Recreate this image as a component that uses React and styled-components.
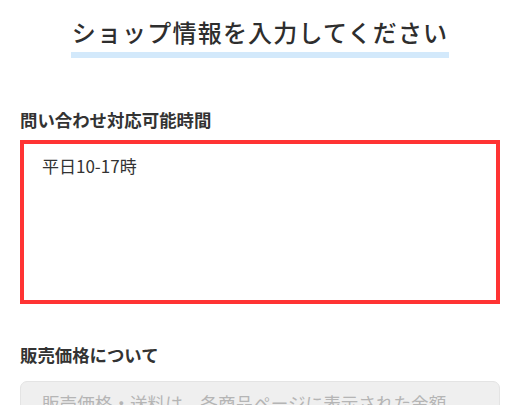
import styled, { createGlobalStyle } from 'styled-components';

const GlobalStyle = createGlobalStyle`
	body {
		margin: 0;
		background: #fff;
		font-family: 'Noto Sans CJK JP', 'Noto Sans', sans-serif;
		color: #333;
	}
`;

const Page = styled.div`
	padding: 15px 20px 0;
`;

const Heading = styled.div`
	text-align: center;
	margin-bottom: 50px;
`;

const HeadingText = styled.h1`
	display: inline-block;
	margin: 0;
	padding: 0 1px 3px;
	font-size: 24px;
	line-height: 34px;
	letter-spacing: 1.2px;
	font-weight: 500;
	color: #2e2e2e;
	border-bottom: 6px solid #d3e9fb;
`;

const Field = styled.section`
	display: flex;
	flex-direction: column;
	gap: ${(p) => p.gap}px;
	margin-bottom: 39px;
`;

const Label = styled.label`
	font-size: 17.4px;
	line-height: 24px;
	font-weight: 700;
	color: #333;
`;

const TextBox = styled.div`
	box-sizing: border-box;
	height: ${(p) => p.height}px;
	padding: ${(p) => (p.error ? '10px 18px' : '9px 40px 9px 21px')};
	border: ${(p) => (p.error ? '4px solid #ff3333' : '1px solid #e4e4e4')};
	border-radius: ${(p) => (p.error ? '0' : '7px')};
	background: ${(p) => (p.error ? '#fff' : '#efefef')};
	font-size: ${(p) => (p.error ? '17px' : '17.6px')};
	line-height: 24px;
	color: ${(p) => (p.error ? '#333' : '#b5b5b5')};
`;

const App = () => {
	return (
		<>
			<GlobalStyle />
			<Page>
				<Heading>
					<HeadingText>ショップ情報を入力してください</HeadingText>
				</Heading>
				<Field gap={8}>
					<Label>問い合わせ対応可能時間</Label>
					<TextBox error height={164}>
						平日10-17時
					</TextBox>
				</Field>
				<Field gap={14}>
					<Label>販売価格について</Label>
					<TextBox height={120}>販売価格・送料は、各商品ページに表示された金額となります。</TextBox>
				</Field>
			</Page>
		</>
	);
};

export default App;
